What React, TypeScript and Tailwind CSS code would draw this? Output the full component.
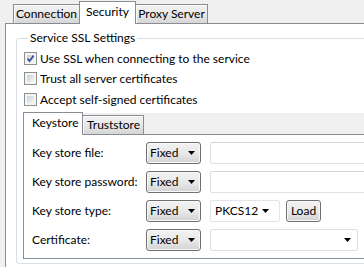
import React from "react";

const tabIdle =
  "flex h-[19px] items-center border border-b-0 border-[#898c95] bg-gradient-to-b from-[#f3f3f3] via-[#e8e8e8] to-[#d6d6d6] px-[2px] shadow-[inset_1px_1px_0_#fcfcfc]";
const tabActive =
  "relative z-10 -mb-px flex h-[23px] items-center border border-b-0 border-[#898c95] bg-white px-[2px] pb-[3px]";

const Arrow = () => (
  <svg width="7" height="4" viewBox="0 0 7 4" className="shrink-0">
    <path d="M0 0H7L3.5 4Z" fill="#000" />
  </svg>
);

const CheckBox = ({ checked, label }: { checked?: boolean; label: string }) => (
  <div className="flex h-[17px] items-center gap-[3px]">
    <div className="relative h-[13px] w-[13px] border border-[#8e8f8f] bg-[#f4f4f4] p-[2px]">
      <div className="h-full w-full bg-gradient-to-br from-[#cdd0d4] to-[#f5f5f5]" />
      {checked && (
        <svg width="11" height="11" viewBox="0 0 11 11" className="absolute left-0 top-0">
          <path d="M2.5 5.5L4.6 8L8.6 2.6" stroke="#3c539a" strokeWidth="1.8" fill="none" />
        </svg>
      )}
    </div>
    <span>{label}</span>
  </div>
);

const ModeCombo = () => (
  <div className="flex h-[22px] w-[55px] shrink-0 items-center justify-between rounded-[3px] border border-[#707070] bg-gradient-to-b from-[#f2f2f2] via-[#e9e9e9] to-[#d3d3d3] pl-[3px] pr-[5px] shadow-[inset_0_0_0_1px_#f8f8f8]">
    <span>Fixed</span>
    <Arrow />
  </div>
);

const TextField = () => (
  <div className="h-[22px] w-[200px] shrink-0 rounded-[2px] border border-[#dcdfe3] border-t-[#d2d5da] bg-white" />
);

const Row = ({ label, children }: { label: string; children: React.ReactNode }) => (
  <div className="flex h-[22px] items-center">
    <span className="w-[114px] shrink-0">{label}</span>
    <ModeCombo />
    <div className="ml-[9px] flex items-center">{children}</div>
  </div>
);

export default function App() {
  return (
    <div className="flex h-[267px] w-[364px] flex-col overflow-hidden bg-[#f0f0f0] font-[family-name:Lato,sans-serif] text-[12px] leading-[16px] text-black">
      <div className="flex h-[23px] shrink-0 items-end pl-[13px]">
        <div className={`${tabIdle} w-[67px] justify-center`}>Connection</div>
        <div className={`${tabActive} -ml-px w-[57px] justify-center`}>Security</div>
        <div className={`${tabIdle} -ml-px w-[73px] justify-center`}>Proxy Server</div>
      </div>

      <div className="ml-[5px] flex-1 border-l border-t border-[#898c95] bg-white pl-[10px]">
        <fieldset className="mt-[6px] mb-[4px] w-[400px] rounded-[3px] border border-[#d5dfe5] pl-[7px] pt-[4px]">
          <legend className="ml-[4px] px-[2px]">Service SSL Settings</legend>
          <CheckBox checked label="Use SSL when connecting to the service" />
          <div className="mt-[3px]">
            <CheckBox label="Trust all server certificates" />
          </div>
          <div className="mt-[4px]">
            <CheckBox label="Accept self-signed certificates" />
          </div>

          <div className="-ml-px mt-[5px] mb-[4px]">
            <div className="flex h-[21px] items-end bg-[#f0f0f0]">
              <div className={`${tabActive} h-[22px] w-[60px] pl-[8px]`}>Keystore</div>
              <div className={`${tabIdle} -ml-px w-[62px] pl-[4px]`}>Truststore</div>
            </div>
            <div className="flex flex-col gap-[7px] border-b border-l border-t border-[#898c95] bg-white pb-[7px] pl-[8px] pt-[7px]">
              <Row label="Key store file:">
                <TextField />
              </Row>
              <Row label="Key store password:">
                <TextField />
              </Row>
              <Row label="Key store type:">
                <div className="flex h-[22px] w-[70px] items-center justify-between rounded-[2px] border border-[#e2e4e7] bg-white pl-[4px] pr-[10px]">
                  <span>PKCS12</span>
                  <Arrow />
                </div>
                <div className="ml-[6px] flex h-[22px] w-[35px] items-center justify-center rounded-[3px] border border-[#707070] bg-gradient-to-b from-[#f2f2f2] via-[#e9e9e9] to-[#d3d3d3] shadow-[inset_0_0_0_1px_#f8f8f8]">
                  Load
                </div>
              </Row>
              <Row label="Certificate:">
                <div className="flex h-[22px] w-[148px] items-center justify-end rounded-[2px] border border-[#dcdfe3] bg-white pr-[6px]">
                  <Arrow />
                </div>
              </Row>
            </div>
          </div>
        </fieldset>
      </div>
    </div>
  );
}
